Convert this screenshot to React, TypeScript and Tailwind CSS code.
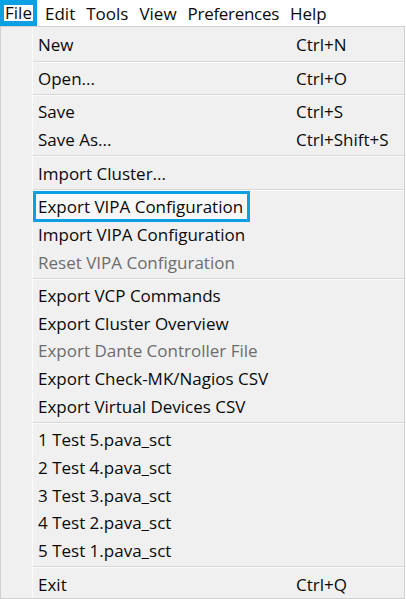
import React from "react";

type Entry =
  | { kind: "item"; label: string; shortcut?: string; disabled?: boolean; focused?: boolean }
  | { kind: "sep" };

const entries: Entry[] = [
  { kind: "item", label: "New", shortcut: "Ctrl+N" },
  { kind: "sep" },
  { kind: "item", label: "Open...", shortcut: "Ctrl+O" },
  { kind: "sep" },
  { kind: "item", label: "Save", shortcut: "Ctrl+S" },
  { kind: "item", label: "Save As...", shortcut: "Ctrl+Shift+S" },
  { kind: "sep" },
  { kind: "item", label: "Import Cluster..." },
  { kind: "sep" },
  { kind: "item", label: "Export VIPA Configuration", focused: true },
  { kind: "item", label: "Import VIPA Configuration" },
  { kind: "item", label: "Reset VIPA Configuration", disabled: true },
  { kind: "sep" },
  { kind: "item", label: "Export VCP Commands" },
  { kind: "item", label: "Export Cluster Overview" },
  { kind: "item", label: "Export Dante Controller File", disabled: true },
  { kind: "item", label: "Export Check-MK/Nagios CSV" },
  { kind: "item", label: "Export Virtual Devices CSV" },
  { kind: "sep" },
  { kind: "item", label: "1 Test 5.pava_sct" },
  { kind: "item", label: "2 Test 4.pava_sct" },
  { kind: "item", label: "3 Test 3.pava_sct" },
  { kind: "item", label: "4 Test 2.pava_sct" },
  { kind: "item", label: "5 Test 1.pava_sct" },
  { kind: "sep" },
  { kind: "item", label: "Exit", shortcut: "Ctrl+Q" },
];

export default function App() {
  return (
    <div
      className="w-[406px] h-[599px] bg-white overflow-hidden text-[17px] text-[#0a0a0a]"
      style={{ fontFamily: '"Open Sans", "Noto Sans", sans-serif' }}
    >
      <div className="flex h-[26px] items-stretch">
        <div className="bg-[#0ba0e3] w-[37px] flex items-center justify-center">
          <span className="bg-white leading-[16px] px-[1px]">File</span>
        </div>
        <div className="flex items-center gap-[11px] pl-[8px] leading-none">
          <span>Edit</span>
          <span>Tools</span>
          <span>View</span>
          <span className="tracking-[-0.3px]">Preferences</span>
          <span>Help</span>
        </div>
      </div>
      <div className="w-[405px] h-[573px] border border-[#d0d0d0] bg-[#f0f0f0] flex">
        <div className="w-[32px] border-r border-r-[#fbfbfb]" />
        <div className="flex-1 flex flex-col pt-[4px]">
          {entries.map((e, i) =>
            e.kind === "sep" ? (
              <div key={i} className="h-[6px] flex flex-col justify-center">
                <div className="h-px bg-[#d8d8d8]" />
                <div className="h-px bg-[#fbfbfb]" />
              </div>
            ) : (
              <div
                key={i}
                className={
                  "h-[27.8px] flex items-center pl-[5px] whitespace-nowrap " +
                  (e.disabled ? "text-[#6d6d6d]" : "text-[#0a0a0a]")
                }
              >
                <div className="w-[258px]">
                  {e.focused ? (
                    <span className="inline-block -ml-[5px] pl-[2px] pr-[4px] leading-[25px] bg-[#f8f8f8] border-[3px] border-[#0ba0e3]">
                      {e.label}
                    </span>
                  ) : (
                    e.label
                  )}
                </div>
                {e.shortcut && <div>{e.shortcut}</div>}
              </div>
            )
          )}
        </div>
      </div>
    </div>
  );
}
